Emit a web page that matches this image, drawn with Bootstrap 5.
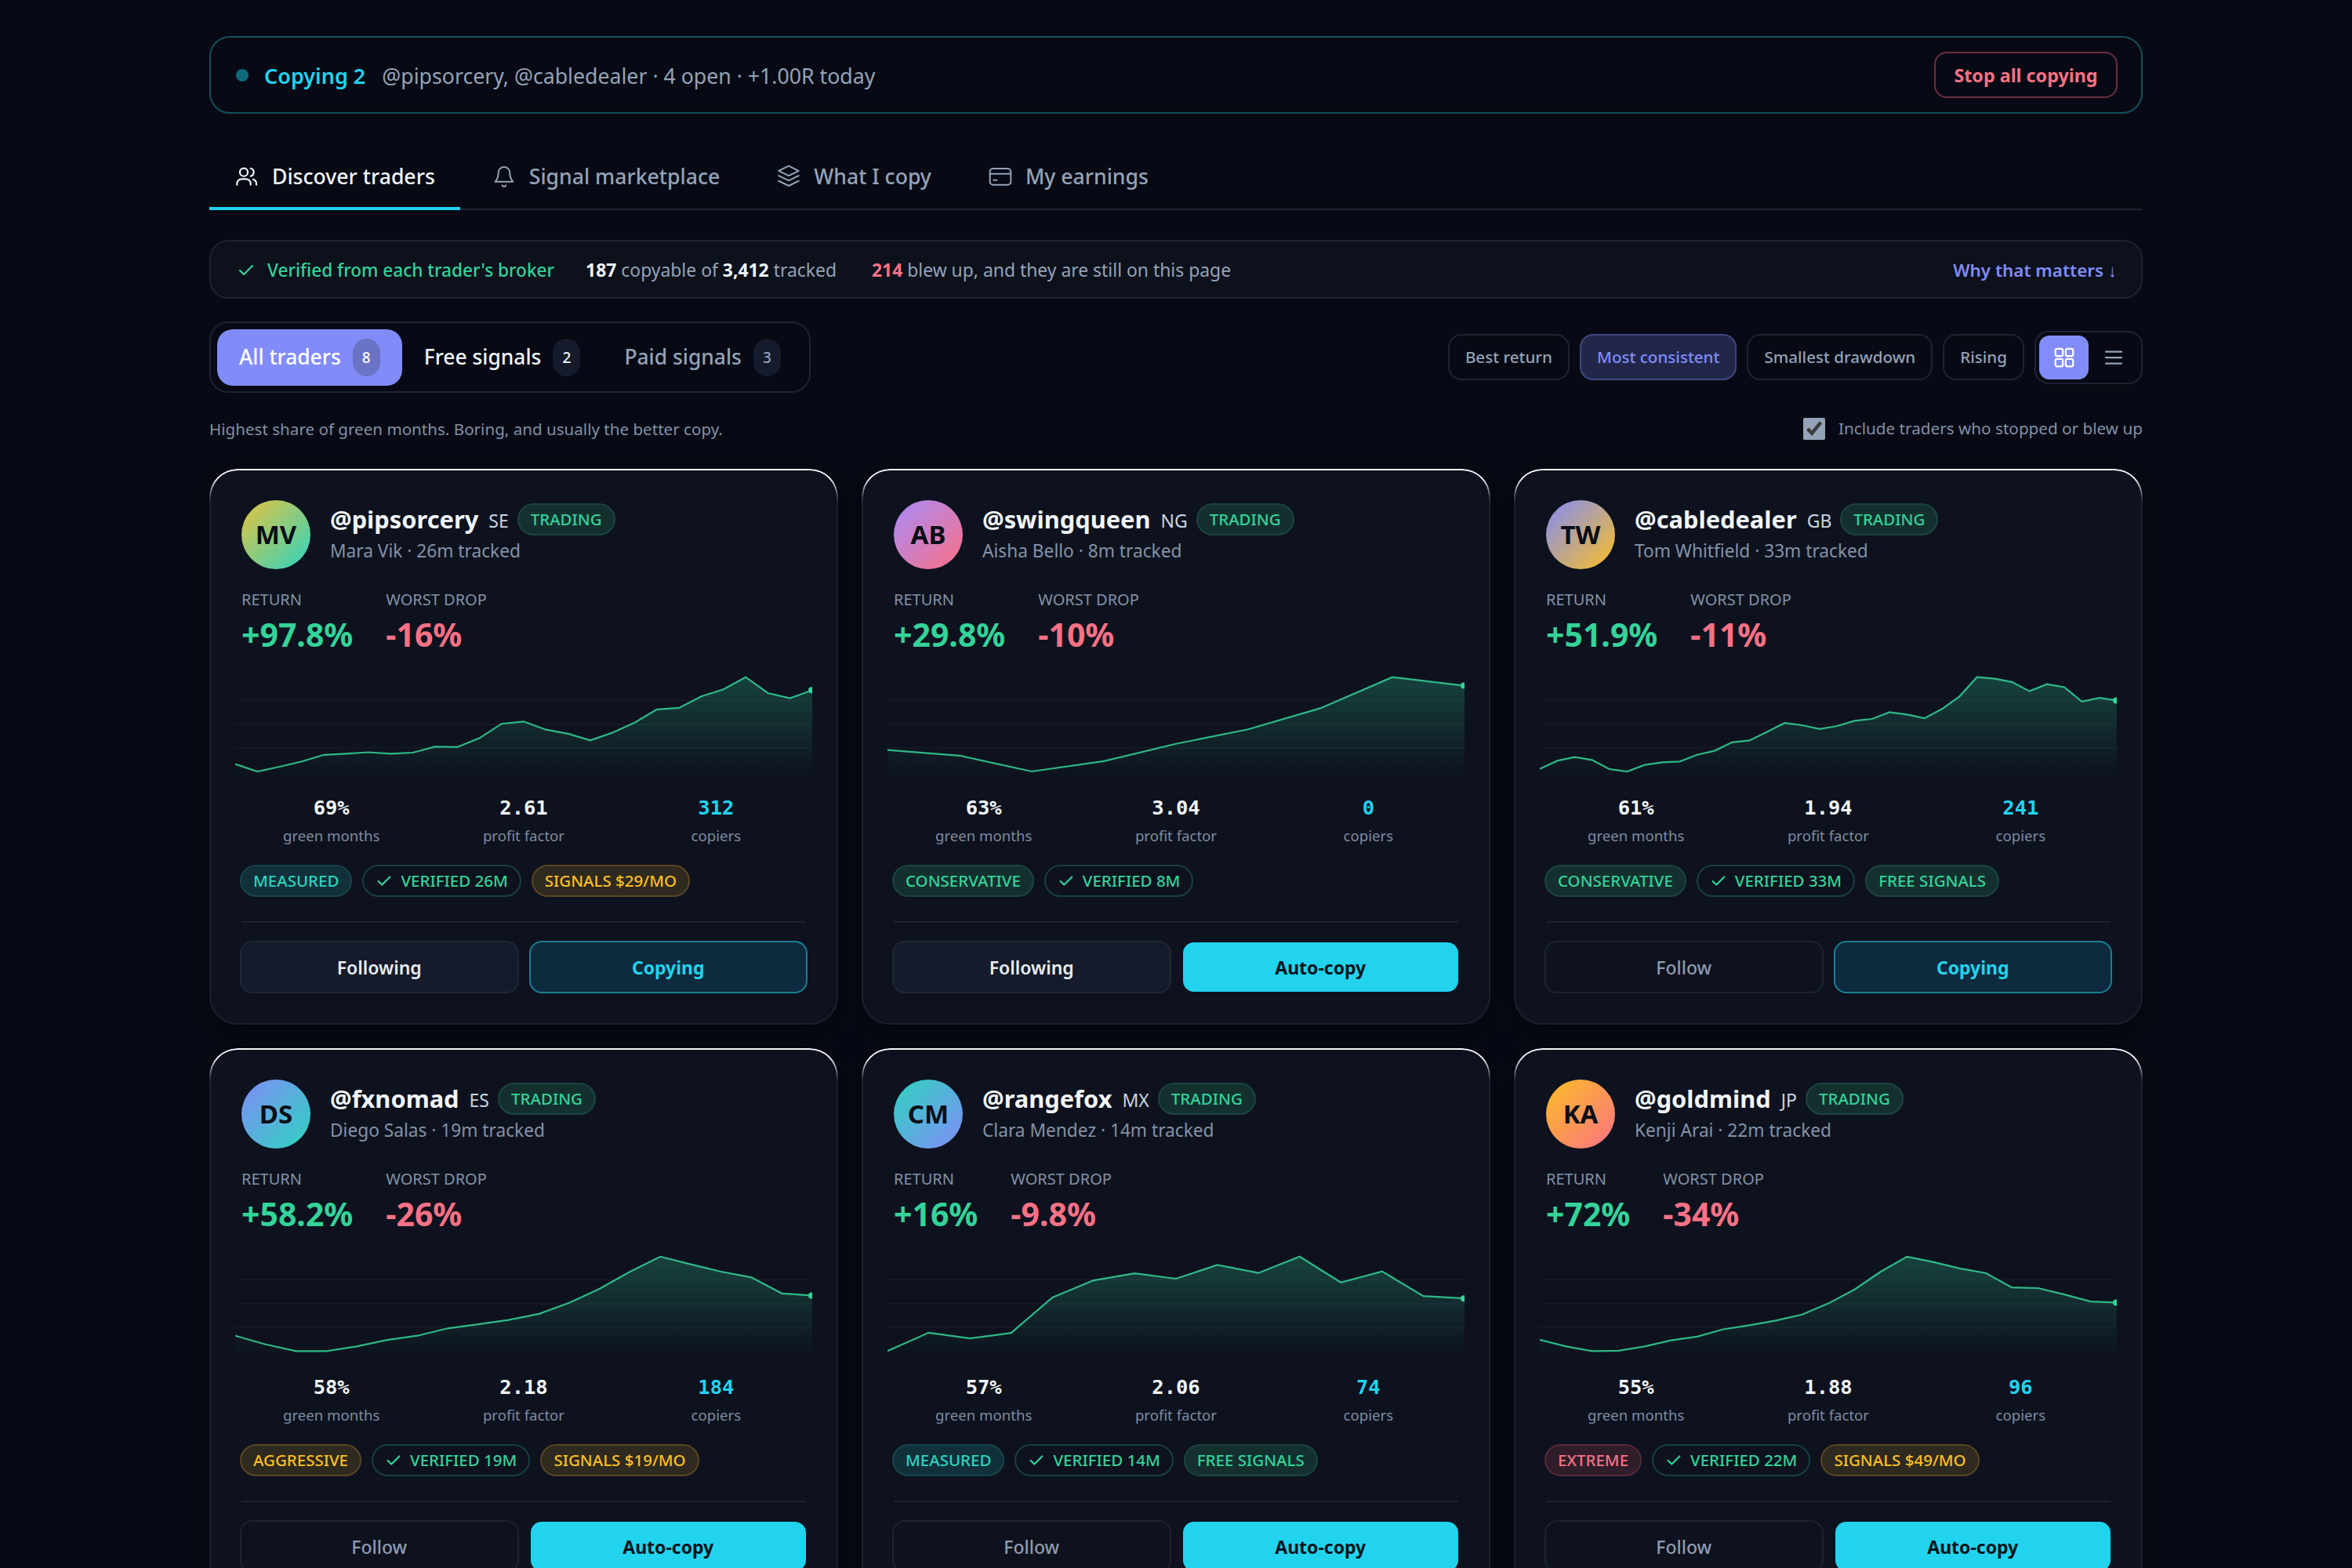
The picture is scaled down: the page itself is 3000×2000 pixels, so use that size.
<!DOCTYPE html>
<html lang="en">
<head>
    <meta charset="UTF-8">
    <title>Discover traders</title>
    <link href="https://cdn.jsdelivr.net/npm/bootstrap@5.3.0/dist/css/bootstrap.min.css" rel="stylesheet">
    <style>
        html, body { height: 100vh; overflow: hidden; }
        body { background: #070a14; color: #e2e8f0; font-family: "Noto Sans", sans-serif; }
        .mono { font-family: "DejaVu Sans Mono", monospace; }

        .page-wrap { width: 2466px; margin: 0 auto; padding-top: 46px; }

        .copy-banner { height: 99px; padding: 0 30px 0 32px; border: 2px solid #14505e; border-radius: 26px; margin-bottom: 60px; }
        .copy-dot { width: 16px; height: 16px; border-radius: 50%; background: #0f6a7a; margin-right: 20px; }
        .copy-title { color: #22d3ee; font-size: 27px; font-weight: 600; margin-right: 21px; padding-top: 3px; }
        .copy-info { color: #94a3b8; font-size: 26.7px; padding-top: 3px; }
        .stop-btn { height: 59px; width: 234px; border: 2px solid #6a2f40; border-radius: 16px; color: #fb7185; font-size: 23.3px; font-weight: 700; background: transparent; padding: 2px 0 0; }

        .tab-strip { height: 63px; border-bottom: 2px solid #1c2333; gap: 8px; margin-bottom: 38px; align-items: flex-start; }
        .tab-item { height: 63px; padding: 0 32px; gap: 16px; color: #94a3b8; font-size: 26.6px; font-weight: 500; display: flex; align-items: flex-start; line-height: 40px; }
        .tab-item svg { width: 32px; height: 32px; margin-top: 4px; flex: none; }
        .tab-item.on { color: #f1f5f9; border-bottom: 4px solid #22d3ee; }

        .verified-strip { height: 75px; padding: 3px 31px 0 33px; border: 2px solid #1c2333; border-radius: 24px; background: #0c111c; font-size: 22.9px; color: #94a3b8; margin-bottom: 29px; }
        .verified-ok { color: #34d399; font-weight: 500; font-size: 22.6px; gap: 15px; margin-right: 40px; }
        .verified-tracked { margin-right: 45px; }
        .verified-strip b { color: #f1f5f9; font-weight: 700; }
        .verified-strip b.bad { color: #fb7185; }
        .why-link { color: #818cf8; font-weight: 600; text-decoration: none; font-size: 22.4px; }

        .seg-box { height: 91px; padding: 8px; border: 2px solid #1c2333; border-radius: 24px; }
        .seg-item { height: 72px; border-radius: 20px; padding: 0 28px; gap: 15px; color: #94a3b8; font-size: 26.4px; font-weight: 500; }
        .seg-item.on { background: #818cf8; color: #fff; }
        .seg-item.lit { color: #f1f5f9; }
        .seg-num { width: 35px; height: 48px; border-radius: 18px; background: #151b2b; font-size: 19px; font-weight: 500; }
        .seg-item.on .seg-num { background: #6a73c4; }

        .sort-pill { height: 59px; padding: 0 20px; border: 2px solid #1c2333; border-radius: 17px; color: #94a3b8; font-size: 20.6px; font-weight: 500; background: transparent; margin-right: 13px; }
        .sort-pill.on { background: #22274a; border-color: #3f4680; color: #818cf8; }
        .view-box { height: 68px; width: 138px; padding: 4px; border: 2px solid #1c2333; border-radius: 18px; }
        .view-btn { width: 64px; height: 56px; border-radius: 13px; }
        .view-btn.on { background: #818cf8; }

        .hint-row { font-size: 20.6px; color: #8290a6; margin-top: 30px; margin-bottom: 35px; height: 32px; }
        .hint-row label { font-size: 20.7px; }
        .hint-row input { width: 28px; height: 28px; accent-color: #94a3b8; margin: 0 17px 0 0; }

        .cards-grid { display: grid; grid-template-columns: repeat(3, minmax(0, 1fr)); gap: 30px; }
        .trader-card { position: relative; height: 709px; padding: 38px 39px 0; background: #0d121e; border: 2px solid #1a2030; border-radius: 36px; box-shadow: 0 10px 40px rgba(0, 0, 0, .35); }
        /* bright top edge that fades out round the corners */
        .trader-card::before { content: ""; position: absolute; inset: -2px; padding: 2px; border-radius: 36px; background: linear-gradient(#f5f7fa 0, #f5f7fa 12px, #2a3040 38px, transparent 44px); -webkit-mask: linear-gradient(#000 0 0) content-box, linear-gradient(#000 0 0); -webkit-mask-composite: xor; mask-composite: exclude; pointer-events: none; }
        .avatar-ball { width: 88px; height: 88px; border-radius: 50%; color: #0a0e17; font-size: 33px; font-weight: 700; margin-right: 25px; flex: none; }
        .handle-name { font-size: 30.8px; font-weight: 700; color: #f1f5f9; line-height: 44px; }
        .handle-cc { font-size: 23px; color: #cbd5e1; margin: 0 11px 0 13px; line-height: 44px; padding-top: 4px; }
        .status-tag { height: 41px; padding: 0 15px; border-radius: 21px; font-size: 20.5px; font-weight: 500; border: 2px solid transparent; display: inline-flex; align-items: center; white-space: nowrap; }
        .tag-green { color: #34d399; background: #13302f; border-color: #1b4540; }
        .tag-teal { color: #2dd4bf; background: #11303a; border-color: #184549; }
        .tag-plain { color: #34d399; background: transparent; border-color: #1a3f40; gap: 10px; }
        .tag-amber { color: #fbbf24; background: #2e2a1f; border-color: #5a4522; }
        .tag-red { color: #fb7185; background: #2f1d2a; border-color: #57283a; }
        .trader-sub { font-size: 22.7px; color: #8492a8; line-height: 32px; margin-top: 1px; }

        .metric-wrap { gap: 42px; margin-top: 24px; }
        .metric-label { font-size: 20px; color: #8492a8; line-height: 30px; }
        .metric-value { font-size: 41px; font-weight: 700; line-height: 50px; margin-top: 4px; }
        .chart-box { display: block; width: 736px; height: 130px; margin: 26px 0 0 -8px; }
        .stat-row { width: 736px; margin: 20px 0 0 -8px; }
        .stat-value { font-size: 25.5px; font-weight: 700; line-height: 40px; color: #f1f5f9; }
        .stat-label { font-size: 18.6px; color: #7f8ca2; line-height: 32px; }
        .tag-row { gap: 13px; margin: 21px 0 0 -2px; }
        .card-rule { height: 2px; background: #1c2333; margin-top: 31px; }
        .action-row { gap: 13px; margin: 23px -2px 0; }
        .action-row button { flex: 1; height: 67px; border-radius: 16px; font-size: 23px; font-weight: 600; border: 2px solid transparent; padding: 1px 0 0; }
        .act-follow { background: transparent; border-color: #1c2333 !important; color: #8f9cb1; font-weight: 500 !important; }
        .act-following { background: #151b2b; border-color: #1f2638 !important; color: #e8edf4; }
        .act-copying { background: #0e2a3e; border-color: #1b7f96 !important; color: #22d3ee; font-weight: 700 !important; }
        .act-auto { background: #22d3ee; color: #07121a; background-clip: padding-box; font-weight: 700 !important; }
    </style>
</head>
<body>

<div class="page-wrap">
    <div class="copy-banner d-flex align-items-center">
        <span class="copy-dot"></span>
        <span class="copy-title">Copying 2</span>
        <span class="copy-info">@pipsorcery, @cabledealer · 4 open · +1.00R today</span>
        <button type="button" class="stop-btn ms-auto">Stop all copying</button>
    </div>

    <div class="tab-strip d-flex">
        <div class="tab-item on">
            <svg viewBox="0 0 24 24" fill="none" stroke="currentColor" stroke-width="1.6" stroke-linecap="round" stroke-linejoin="round"><circle cx="9" cy="8" r="3.8"/><path d="M2.5 20v-1a4.5 4.5 0 0 1 4.5-4.5h4a4.5 4.5 0 0 1 4.5 4.5v1"/><path d="M15.5 4.3a3.8 3.8 0 0 1 0 7.4"/><path d="M21 20v-1a4.5 4.5 0 0 0-3-4.2"/></svg>
            Discover traders
        </div>
        <div class="tab-item">
            <svg viewBox="0 0 24 24" fill="none" stroke="currentColor" stroke-width="1.5" stroke-linecap="round" stroke-linejoin="round"><path d="M6.5 8.5a5.5 5.5 0 0 1 11 0c0 4.5 1.5 7 3 8.5h-17c1.5-1.5 3-4 3-8.5z"/><path d="M10.3 20.5a1.8 1.8 0 0 0 3.4 0"/></svg>
            Signal marketplace
        </div>
        <div class="tab-item">
            <svg viewBox="0 0 24 24" fill="none" stroke="currentColor" stroke-width="1.5" stroke-linecap="round" stroke-linejoin="round"><path d="M12 2 2.5 6.7l9.5 4.7 9.5-4.7z"/><path d="m2.5 11.3 9.5 4.7 9.5-4.7"/><path d="m2.5 16.3 9.5 4.7 9.5-4.7"/></svg>
            What I copy
        </div>
        <div class="tab-item">
            <svg viewBox="0 0 24 24" fill="none" stroke="currentColor" stroke-width="1.5" stroke-linecap="round" stroke-linejoin="round"><rect x="2" y="4.5" width="20" height="15.5" rx="3"/><path d="M2 9.5h20"/><path d="M5.5 15.5h3"/></svg>
            My earnings
        </div>
    </div>

    <div class="verified-strip d-flex align-items-center">
        <span class="verified-ok d-flex align-items-center">
            <svg width="24" height="24" viewBox="0 0 24 24" fill="none" stroke="currentColor" stroke-width="2.2" stroke-linecap="round" stroke-linejoin="round"><path d="M20 6 9 17l-5-5"/></svg>
            Verified from each trader's broker
        </span>
        <span class="verified-tracked"><b>187</b> copyable of <b>3,412</b> tracked</span>
        <span><b class="bad">214</b> blew up, and they are still on this page</span>
        <a href="#" class="why-link ms-auto">Why that matters ↓</a>
    </div>

    <div class="d-flex align-items-center justify-content-between">
        <div class="seg-box d-flex">
            <div class="seg-item on d-flex align-items-center">All traders <span class="seg-num d-flex align-items-center justify-content-center">8</span></div>
            <div class="seg-item lit d-flex align-items-center">Free signals <span class="seg-num d-flex align-items-center justify-content-center">2</span></div>
            <div class="seg-item d-flex align-items-center">Paid signals <span class="seg-num d-flex align-items-center justify-content-center">3</span></div>
        </div>
        <div class="d-flex align-items-center">
            <button type="button" class="sort-pill">Best return</button>
            <button type="button" class="sort-pill on">Most consistent</button>
            <button type="button" class="sort-pill">Smallest drawdown</button>
            <button type="button" class="sort-pill">Rising</button>
            <div class="view-box d-flex align-items-center">
                <div class="view-btn on d-flex align-items-center justify-content-center">
                    <svg width="30" height="30" viewBox="0 0 24 24" fill="none" stroke="#fff" stroke-width="1.8"><rect x="3" y="3" width="7.5" height="7.5" rx="1.5"/><rect x="13.5" y="3" width="7.5" height="7.5" rx="1.5"/><rect x="3" y="13.5" width="7.5" height="7.5" rx="1.5"/><rect x="13.5" y="13.5" width="7.5" height="7.5" rx="1.5"/></svg>
                </div>
                <div class="view-btn d-flex align-items-center justify-content-center">
                    <svg width="30" height="30" viewBox="0 0 24 24" fill="none" stroke="#94a3b8" stroke-width="1.8" stroke-linecap="round"><path d="M4 6h16M4 12h16M4 18h16"/></svg>
                </div>
            </div>
        </div>
    </div>

    <div class="hint-row d-flex align-items-center justify-content-between">
        <span>Highest share of green months. Boring, and usually the better copy.</span>
        <label class="d-flex align-items-center"><input type="checkbox" checked>Include traders who stopped or blew up</label>
    </div>

    <div class="cards-grid" id="traderGrid"></div>
</div>

<script src="https://cdn.jsdelivr.net/npm/bootstrap@5.3.0/dist/js/bootstrap.bundle.min.js"></script>
<script>
    const traders = [
        { handle: 'pipsorcery', cc: 'SE', initials: 'MV', colors: ['#e8c23f', '#2dd4bf'], name: 'Mara Vik', months: 26, ret: '+97.8%', drop: '-16%', green: '69%', pf: '2.61', copiers: 312,
          style: ['MEASURED', 'tag-teal'], signal: ['SIGNALS $29/MO', 'tag-amber'], follow: 'following', copy: 'copying',
          ys: [114.6,124,118,111.3,102.8,101.4,99.5,101.4,100,92.4,92.9,81.6,63.2,60.3,70.7,75.9,84.4,74.5,61.8,44.8,42.9,28.3,19.3,3.7,24,30.6,20.2] },
        { handle: 'swingqueen', cc: 'NG', initials: 'AB', colors: ['#a78bfa', '#fb7185'], name: 'Aisha Bello', months: 8, ret: '+29.8%', drop: '-10%', green: '63%', pf: '3.04', copiers: 0,
          style: ['CONSERVATIVE', 'tag-green'], signal: null, follow: 'following', copy: 'auto',
          ys: [96.7,103.8,124,110.8,88.7,70.3,43.4,3.7,14.6] },
        { handle: 'cabledealer', cc: 'GB', initials: 'TW', colors: ['#818cf8', '#fbbf24'], name: 'Tom Whitfield', months: 33, ret: '+51.9%', drop: '-11%', green: '61%', pf: '1.94', copiers: 241,
          style: ['CONSERVATIVE', 'tag-green'], signal: ['FREE SIGNALS', 'tag-green'], follow: 'follow', copy: 'copying',
          ys: [120.8,110.4,105.6,109.4,121.2,124,115.6,112.3,111.3,102.8,97.6,86.8,84.4,73.6,62.2,65,69.8,66,59.4,57,48.5,51.4,56.1,44.3,28.3,3.7,5.6,9.8,21.6,12.7,16.5,34.9,30.1,33.4] },
        { handle: 'fxnomad', cc: 'ES', initials: 'DS', colors: ['#818cf8', '#2dd4bf'], name: 'Diego Salas', months: 19, ret: '+58.2%', drop: '-26%', green: '58%', pf: '2.18', copiers: 184,
          style: ['AGGRESSIVE', 'tag-amber'], signal: ['SIGNALS $19/MO', 'tag-amber'], follow: 'follow', copy: 'auto',
          ys: [104.7,115.8,124.3,124.3,118.3,110.2,104.7,95.3,90.1,84.6,76.9,62.8,44.8,23,3.8,13.6,23,30.3,50.8,53.4] },
        { handle: 'rangefox', cc: 'MX', initials: 'CM', colors: ['#2dd4bf', '#818cf8'], name: 'Clara Mendez', months: 14, ret: '+16%', drop: '-9.8%', green: '57%', pf: '2.06', copiers: 74,
          style: ['MEASURED', 'tag-teal'], signal: ['FREE SIGNALS', 'tag-green'], follow: 'follow', copy: 'auto',
          ys: [124.3,100.8,108.1,101.2,55.9,34.1,25.2,32,14.5,24.7,3.8,36.7,22.6,54.2,57.2] },
        { handle: 'goldmind', cc: 'JP', initials: 'KA', colors: ['#fbbf24', '#fb7185'], name: 'Kenji Arai', months: 22, ret: '+72%', drop: '-34%', green: '55%', pf: '1.88', copiers: 96,
          style: ['EXTREME', 'tag-red'], signal: ['SIGNALS $49/MO', 'tag-amber'], follow: 'follow', copy: 'auto',
          ys: [109.8,118.3,124.3,123.9,118.3,110.6,105.9,96.5,91.4,85.4,77.7,63.6,45.7,23,3.8,10.6,18.8,24.7,43.1,44,52.1,61.1,62.4] }
    ];

    const followBtn = { follow: ['Follow', 'act-follow'], following: ['Following', 'act-following'] };
    const copyBtn = { auto: ['Auto-copy', 'act-auto'], copying: ['Copying', 'act-copying'] };

    function chartSvg(t, i) {
        const step = 736 / (t.ys.length - 1);
        const pts = t.ys.map((y, n) => (n * step).toFixed(1) + ',' + y).join(' ');
        const lastY = t.ys[t.ys.length - 1];
        return `<svg class="chart-box" viewBox="0 0 736 130">
            <defs><linearGradient id="fill${i}" x1="0" y1="0" x2="0" y2="1"><stop offset="0" stop-color="#34d399" stop-opacity=".25"/><stop offset="1" stop-color="#34d399" stop-opacity="0"/></linearGradient></defs>
            <path d="M0 33.5H736M0 64H736M0 94H736" stroke="#161c29" stroke-width="1.5"/>
            <polygon points="0,130 ${pts} 736,130" fill="url(#fill${i})"/>
            <polyline points="${pts}" fill="none" stroke="#34d399" stroke-width="2.2" stroke-opacity=".85"/>
            <circle cx="735" cy="${lastY}" r="4" fill="#34d399"/>
        </svg>`;
    }

    document.getElementById('traderGrid').innerHTML = traders.map((t, i) => {
        const tick = '<svg width="22" height="22" viewBox="0 0 24 24" fill="none" stroke="currentColor" stroke-width="2.4" stroke-linecap="round" stroke-linejoin="round"><path d="M20 6 9 17l-5-5"/></svg>';
        return `<div class="trader-card">
            <div class="d-flex">
                <div class="avatar-ball d-flex align-items-center justify-content-center" style="background:linear-gradient(135deg,${t.colors[0]},${t.colors[1]})">${t.initials}</div>
                <div>
                    <div class="d-flex align-items-center">
                        <span class="handle-name">@${t.handle}</span><span class="handle-cc">${t.cc}</span><span class="status-tag tag-green">TRADING</span>
                    </div>
                    <div class="trader-sub">${t.name} · ${t.months}m tracked</div>
                </div>
            </div>
            <div class="metric-wrap d-flex">
                <div><div class="metric-label">RETURN</div><div class="metric-value" style="color:#34d399">${t.ret}</div></div>
                <div><div class="metric-label">WORST DROP</div><div class="metric-value" style="color:#fb7185">${t.drop}</div></div>
            </div>
            ${chartSvg(t, i)}
            <div class="stat-row row g-0 text-center">
                <div class="col-4"><div class="stat-value mono">${t.green}</div><div class="stat-label">green months</div></div>
                <div class="col-4"><div class="stat-value mono">${t.pf}</div><div class="stat-label">profit factor</div></div>
                <div class="col-4"><div class="stat-value mono" style="color:#22d3ee">${t.copiers}</div><div class="stat-label">copiers</div></div>
            </div>
            <div class="tag-row d-flex">
                <span class="status-tag ${t.style[1]}">${t.style[0]}</span>
                <span class="status-tag tag-plain">${tick}VERIFIED ${t.months}M</span>
                ${t.signal ? `<span class="status-tag ${t.signal[1]}">${t.signal[0]}</span>` : ''}
            </div>
            <div class="card-rule"></div>
            <div class="action-row d-flex">
                <button type="button" class="${followBtn[t.follow][1]}">${followBtn[t.follow][0]}</button>
                <button type="button" class="${copyBtn[t.copy][1]}">${copyBtn[t.copy][0]}</button>
            </div>
        </div>`;
    }).join('');
</script>

</body>
</html>
